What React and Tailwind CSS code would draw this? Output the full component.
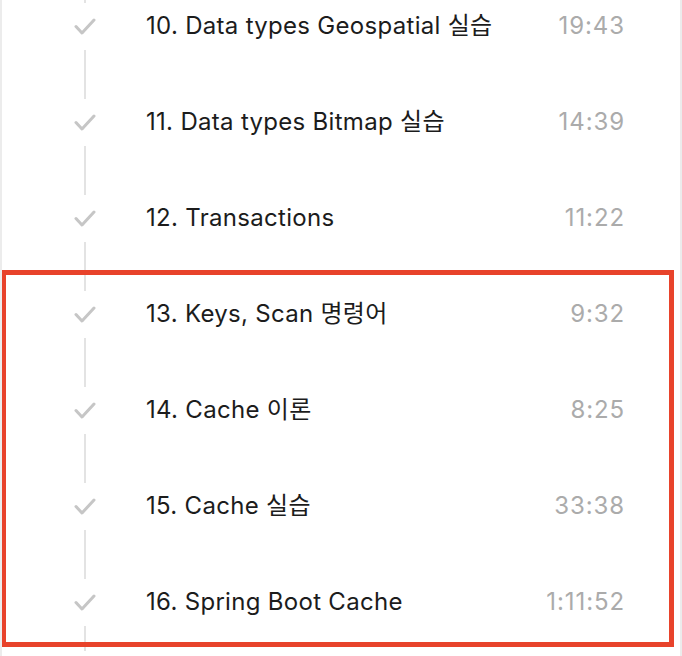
import React from "react";

const rows = [
  ["10. Data types Geospatial 실습", "19:43"],
  ["11. Data types Bitmap 실습", "14:39"],
  ["12. Transactions", "11:22"],
  ["13. Keys, Scan 명령어", "9:32"],
  ["14. Cache 이론", "8:25"],
  ["15. Cache 실습", "33:38"],
  ["16. Spring Boot Cache", "1:11:52"],
];

function Check() {
  return (
    <svg width="22" height="20" viewBox="0 0 22 20" className="block">
      <path d="M2 9.5 L8 16 L20 3" fill="none" stroke="#c6c6c6" strokeWidth="3" strokeLinecap="round" strokeLinejoin="round" />
    </svg>
  );
}

export default function App() {
  return (
    <div
      className="relative w-[682px] h-[656px] overflow-hidden bg-white border-l-[2px] border-r-[2px] border-[#ececec]"
      style={{ fontFamily: "Inter, 'Noto Sans CJK KR', sans-serif" }}
    >
      <div className="-mt-[21px] flex flex-col">
        {rows.map(([t, d]) => (
          <div key={t} className="flex h-[96px] items-center">
            <div className="w-[94px] h-full flex flex-col items-end">
              <div className="w-[22px] h-full flex flex-col items-center">
                <div className="w-[2px] h-[24px] bg-[#e3e3e3] -ml-[1px]" />
                <div className="flex-1 flex items-center justify-center">
                  <Check />
                </div>
                <div className="w-[2px] h-[25px] bg-[#e3e3e3] -ml-[1px]" />
              </div>
            </div>
            <div className="ml-[50px] flex-1 text-[24px] tracking-[0.3px] text-[#1c1c1c] -mt-[3px]">{t}</div>
            <div className="w-[120px] mr-[55px] text-right text-[24px] tracking-[0.9px] text-[#ababab] -mt-[3px]">{d}</div>
          </div>
        ))}
      </div>
      <div className="absolute left-[-1px] top-[270px] w-[673px] h-[377px] border-[5px] border-[#e8432b]" />
    </div>
  );
}
